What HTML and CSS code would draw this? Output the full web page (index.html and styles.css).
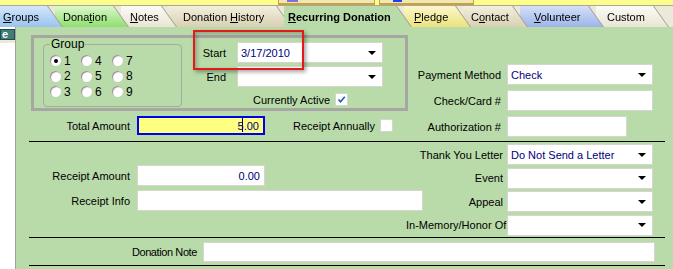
FILE: index.html
```html
<!DOCTYPE html>
<html lang="en">
<head>
    <meta charset="UTF-8">
    <title>Recurring Donation</title>
    <link rel="stylesheet" href="styles.css">
</head>
<body>
    <div class="topbar">
        <div class="tb-box tb-one"><span class="tb-mark"></span></div>
        <div class="tb-box tb-two"><span class="tb-mark tb-blue"></span></div>
    </div>

    <div class="tabs">
        <div class="tab t-groups"><div class="face"><u>G</u>roups</div></div>
        <div class="tab t-donation"><div class="face">Dona<u>t</u>ion</div></div>
        <div class="tab t-notes"><div class="face"><u>N</u>otes</div></div>
        <div class="tab t-history"><div class="face">Donation <u>H</u>istory</div></div>
        <div class="tab t-recurring"><div class="face"><u>R</u>ecurring Donation</div></div>
        <div class="tab t-pledge"><div class="face"><u>P</u>ledge</div></div>
        <div class="tab t-contact"><div class="face">C<u>o</u>ntact</div></div>
        <div class="tab t-volunteer"><div class="face"><u>V</u>olunteer</div></div>
        <div class="tab t-custom"><div class="face">Custom</div></div>
    </div>

    <div class="main">
        <div class="side">
            <div class="side-btn">e</div>
            <div class="side-bar"></div>
        </div>

        <div class="content">
            <div class="upper">
                <div class="left-col">
                    <div class="frame">
                        <fieldset class="group">
                            <legend>Group</legend>
                            <div class="radios">
                                <div class="radio"><span class="dot on"></span>1</div>
                                <div class="radio"><span class="dot"></span>4</div>
                                <div class="radio"><span class="dot"></span>7</div>
                                <div class="radio"><span class="dot"></span>2</div>
                                <div class="radio"><span class="dot"></span>5</div>
                                <div class="radio"><span class="dot"></span>8</div>
                                <div class="radio"><span class="dot"></span>3</div>
                                <div class="radio"><span class="dot"></span>6</div>
                                <div class="radio"><span class="dot"></span>9</div>
                            </div>
                        </fieldset>
                        <div class="dates">
                            <div class="row">
                                <span class="lbl">Start</span>
                                <div class="field select"><span class="val">3/17/2010</span><span class="arrow"></span></div>
                            </div>
                            <div class="row">
                                <span class="lbl">End</span>
                                <div class="field select"><span class="val"></span><span class="arrow"></span></div>
                            </div>
                            <div class="active-row">
                                <span>Currently Active</span>
                                <span class="check">
                                    <svg width="11" height="11" viewBox="0 0 11 11"><path d="M2.5 5.5 L4.5 7.8 L8.8 2.8" fill="none" stroke="#2b5bc9" stroke-width="1.7"/></svg>
                                </span>
                            </div>
                        </div>
                    </div>
                    <div class="total-row">
                        <span class="lbl">Total Amount</span>
                        <div class="field amount focus"><span class="caret"></span>5.00</div>
                        <span class="annual">Receipt Annually</span>
                        <span class="check"></span>
                    </div>
                </div>

                <div class="right-col">
                    <div class="row">
                        <span class="lbl">Payment Method</span>
                        <div class="field select"><span class="val">Check</span><span class="arrow"></span></div>
                    </div>
                    <div class="row">
                        <span class="lbl">Check/Card #</span>
                        <div class="field"></div>
                    </div>
                    <div class="row">
                        <span class="lbl">Authorization #</span>
                        <div class="field short"></div>
                    </div>
                </div>
            </div>

            <div class="rule"></div>

            <div class="mid">
                <div class="mid-left">
                    <div class="row">
                        <span class="lbl">Receipt Amount</span>
                        <div class="field amount">0.00</div>
                    </div>
                    <div class="row">
                        <span class="lbl">Receipt Info</span>
                        <div class="field wide"></div>
                    </div>
                </div>
                <div class="mid-right">
                    <div class="row">
                        <span class="lbl">Thank You Letter</span>
                        <div class="field select"><span class="val">Do Not Send a Letter</span><span class="arrow"></span></div>
                    </div>
                    <div class="row">
                        <span class="lbl">Event</span>
                        <div class="field select"><span class="val"></span><span class="arrow"></span></div>
                    </div>
                    <div class="row">
                        <span class="lbl">Appeal</span>
                        <div class="field select"><span class="val"></span><span class="arrow"></span></div>
                    </div>
                    <div class="row">
                        <span class="lbl">In-Memory/Honor Of</span>
                        <div class="field select"><span class="val"></span><span class="arrow"></span></div>
                    </div>
                </div>
            </div>

            <div class="rule"></div>

            <div class="note-row">
                <span class="lbl">Donation Note</span>
                <div class="field note"></div>
            </div>

            <div class="rule rule-last"></div>
        </div>
    </div>

    <div class="callout"></div>
</body>
</html>
```

FILE: styles.css
```css
body {
    margin: 0;
    font-family: 'Liberation Sans', Arial, sans-serif;
    font-size: 11px;
    color: #000;
    background-color: #fff;
    width: 673px;
    height: 269px;
    overflow: hidden;
    position: relative;
}

/* top strip */
.topbar {
    height: 5px;
    background-color: #fdfd8c;
    display: flex;
}
.tb-box {
    box-sizing: border-box;
    height: 5px;
    background-color: #f1e6b6;
    border: 1px solid #c9a23a;
    border-top: none;
    border-bottom-width: 2px;
}
.tb-one {
    margin-left: 278px;
    width: 97px;
}
.tb-two {
    margin-left: 4px;
    width: 95px;
}
.tb-mark {
    display: block;
    width: 11px;
    height: 2px;
    margin-left: 8px;
    background-color: #7a72d6;
}
.tb-blue {
    width: 9px;
    margin-left: 13px;
    background-color: #1f3cff;
}

/* tabs */
.tabs {
    height: 21px;
    border-top: 1px solid #aaa89c;
    background-color: #ece9d8;
    display: flex;
}
.tab {
    position: relative;
    height: 21px;
    margin-left: -7px;
    filter: drop-shadow(1px 0 0 #9d9b90);
}
.tab .face {
    box-sizing: border-box;
    height: 21px;
    line-height: 22px;
    white-space: nowrap;
    clip-path: polygon(0 0, calc(100% - 15px) 0, 100% 100%, 0 100%);
}
.t-groups { margin-left: 0; width: 62px; z-index: 9; }
.t-groups .face { padding-left: 3px; background: linear-gradient(#d3e7fc, #9cc3ee); }
.t-donation { width: 73px; z-index: 8; }
.t-donation .face { padding-left: 8px; background: linear-gradient(#dcf8cc, #8fdf6f); }
.t-notes { width: 55px; z-index: 7; }
.t-notes .face { padding-left: 9px; background: linear-gradient(#fbfaf5, #e9e6d4); }
.t-history { width: 122px; z-index: 6; }
.t-history .face { padding-left: 14px; background: linear-gradient(#f3efdf, #d8d0b2); }
.t-recurring { width: 127px; z-index: 10; }
.t-recurring .face { padding-left: 4px; font-weight: bold; background-color: #b9dba9; }
.t-pledge { width: 66px; z-index: 5; }
.t-pledge .face { padding-left: 10px; background: linear-gradient(#fcf7cc, #ece27e); }
.t-contact { width: 64px; z-index: 4; }
.t-contact .face { padding-left: 8px; background: linear-gradient(#f3efdf, #d8d0b2); }
.t-volunteer { width: 83px; z-index: 3; }
.t-volunteer .face { padding-left: 14px; background: linear-gradient(#d4e0f9, #9cb5ea); }
.t-custom { width: 72px; z-index: 2; }
.t-custom .face { padding-left: 11px; background: linear-gradient(#fbfaf5, #e9e6d4); }

/* main area */
.main {
    display: flex;
    height: 242px;
}
.side {
    width: 15px;
    border-right: 1px solid #a2a29a;
    background-color: #fff;
}
.side-btn {
    box-sizing: border-box;
    height: 11px;
    margin-top: 2px;
    padding-left: 1px;
    background-color: #3e7d7a;
    border: 1px solid #214c4a;
    color: #fff;
    font-weight: bold;
    font-size: 11px;
    line-height: 8px;
}
.side-bar {
    height: 3px;
    background-color: #ece9d8;
}
.content {
    flex: 1;
    background-color: #b9dba9;
}

/* shared fields */
.row {
    display: flex;
    align-items: center;
    height: 21px;
}
.lbl {
    text-align: right;
    white-space: nowrap;
}
.field {
    box-sizing: border-box;
    height: 21px;
    width: 146px;
    background-color: #fff;
    border: 1px solid #d6d6ce;
    color: #000080;
    display: flex;
    align-items: center;
    padding-left: 3px;
    white-space: nowrap;
}
.select .val {
    flex: 1;
}
.arrow {
    width: 0;
    height: 0;
    margin-right: 6px;
    border-left: 4px solid transparent;
    border-right: 4px solid transparent;
    border-top: 4px solid #000;
}
.check {
    box-sizing: border-box;
    width: 13px;
    height: 13px;
    background-color: #fff;
    border: 1px solid #d6d6ce;
    display: flex;
    align-items: center;
    justify-content: center;
}

/* upper section */
.upper {
    display: flex;
    padding: 8px 0 0 15px;
    height: 106px;
}
.left-col {
    width: 377px;
}
.frame {
    box-sizing: border-box;
    width: 377px;
    height: 76px;
    border: 3px solid #a6a6a2;
    display: flex;
    align-items: flex-start;
}
.group {
    box-sizing: border-box;
    width: 139px;
    height: 69px;
    margin: 0 0 0 9px;
    padding: 0 0 0 6px;
    border: 1px solid #a3ad9c;
    border-radius: 4px;
}
.group legend {
    padding: 0 1px;
    line-height: 13px;
    font-size: 12px;
}
.radios {
    display: grid;
    grid-template-columns: repeat(3, 31px);
    grid-auto-rows: 15.5px;
    margin-top: 2px;
}
.radio {
    display: flex;
    align-items: center;
    gap: 3px;
    font-size: 12px;
}
.dot {
    width: 11px;
    height: 11px;
    border-radius: 50%;
    background-color: #fff;
    box-shadow: inset 1px 1px 1px #8e8e88, 0 0 0 0.5px #c8c8c0;
    display: flex;
    align-items: center;
    justify-content: center;
}
.dot.on::after {
    content: '';
    width: 4px;
    height: 4px;
    border-radius: 50%;
    background-color: #000;
}
.dates {
    margin-top: 4px;
    display: flex;
    flex-direction: column;
    gap: 3px;
}
.dates .lbl {
    width: 44px;
    margin-right: 11px;
}
.active-row {
    display: flex;
    align-items: center;
    gap: 5px;
    margin: 3px 0 0 71px;
    height: 13px;
}
.total-row {
    display: flex;
    align-items: center;
    height: 19px;
    margin-top: 5px;
}
.total-row .lbl {
    width: 99px;
    margin-right: 7px;
}
.amount {
    width: 128px;
    justify-content: flex-end;
    padding-right: 4px;
    position: relative;
}
.focus {
    height: 19px;
    background-color: #ffff80;
    border: 2px solid #0000f0;
}
.caret {
    position: absolute;
    left: 103px;
    top: 0;
    width: 2px;
    height: 14px;
    border-left: 1px solid #000080;
}
.annual {
    margin: 0 5px 0 28px;
}
.right-col {
    margin-top: 29px;
    display: flex;
    flex-direction: column;
    gap: 5px;
}
.right-col .lbl {
    width: 93px;
    margin-right: 6px;
}
.short {
    width: 120px;
}

/* rules */
.rule {
    height: 1px;
    margin: 0 8px 0 13px;
    background-color: #000;
}
.rule-last {
    margin-top: 3px;
}

/* middle section */
.mid {
    display: flex;
    height: 95px;
}
.mid-left {
    width: 407px;
    margin-right: -17px;
    padding-top: 23px;
    display: flex;
    flex-direction: column;
    gap: 4px;
}
.mid-left .lbl {
    width: 114px;
    margin-right: 7px;
}
.wide {
    width: 286px;
}
.mid-right {
    padding-top: 2px;
    display: flex;
    flex-direction: column;
    gap: 2.5px;
}
.mid-right .lbl {
    width: 97px;
    margin-right: 4px;
}

/* note */
.note-row {
    display: flex;
    align-items: center;
    height: 20px;
    margin-top: 4px;
}
.note-row .lbl {
    width: 181px;
    margin-right: 6px;
    letter-spacing: -0.4px;
}
.note {
    width: 452px;
    height: 20px;
}

/* annotation drawn over the screenshot */
.callout {
    position: absolute;
    left: 193px;
    top: 30px;
    width: 111px;
    height: 40px;
    box-sizing: border-box;
    border: 2px solid #e41a1a;
    box-shadow: 2px 2px 4px rgba(0, 0, 0, 0.35), inset 2px 2px 4px rgba(0, 0, 0, 0.25);
}
```
